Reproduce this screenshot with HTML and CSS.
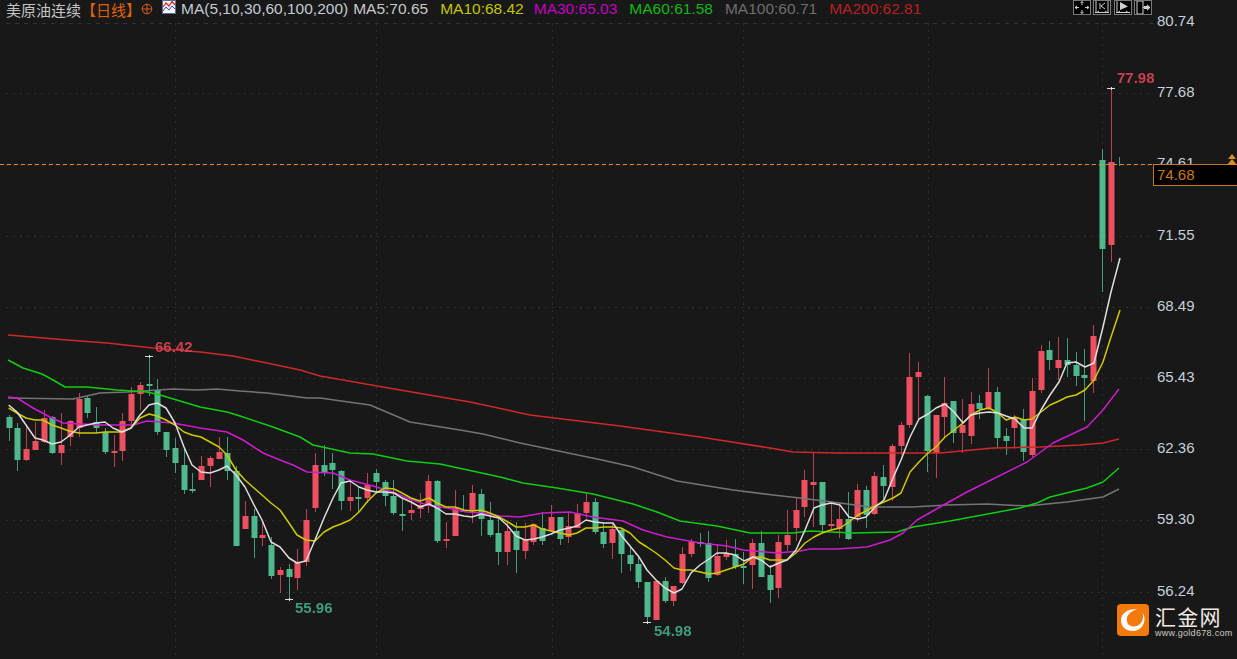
FILE: index.html
```html
<!DOCTYPE html>
<html lang="zh">
<head>
<meta charset="utf-8">
<title>美原油连续 日线</title>
<link rel="stylesheet" href="styles.css">
</head>
<body>
<div class="terminal">
  <header class="topbar">
    <div class="legend">
      <span class="symbol">美原油连续</span>
      <span class="period">【日线】</span>
      <svg class="zoom-icon" width="12" height="12" viewBox="0 0 12 12"><circle cx="6" cy="6" r="4.8"/><path d="M1 6H11M6 1V11"/></svg>
      <svg class="ma-icon" width="15" height="14" viewBox="0 0 15 14"><rect class="ma-frame" x="0.5" y="0.5" width="13" height="13"/><path class="ma-red" d="M1 7L4 3L7 6L10 1.5L13 5"/><path class="ma-blue" d="M1 11L4 7L7 10L10 6L13 9"/></svg>
      <span class="ma ma-title">MA(5,10,30,60,100,200)</span>
      <span class="ma ma5">MA5:70.65</span>
      <span class="ma ma10">MA10:68.42</span>
      <span class="ma ma30">MA30:65.03</span>
      <span class="ma ma60">MA60:61.58</span>
      <span class="ma ma100">MA100:60.71</span>
      <span class="ma ma200">MA200:62.81</span>
    </div>
    <div class="tools">
      <svg class="tool" width="18" height="15" viewBox="0 0 18 15"><path d="M2 7.5H6M12 7.5H16M9 1.5V5M9 10V13.5M4 6L2 7.5L4 9M14 6L16 7.5L14 9M7.5 3L9 1.5L10.5 3M7.5 12L9 13.5L10.5 12"/></svg>
      <svg class="tool" width="18" height="15" viewBox="0 0 18 15"><path d="M3 1V12M15 1V12M2 12.5H16M4 12.5L6 11M14 12.5L12 11M7 3V9M8 6L12 3M8 6L12 9"/></svg>
      <svg class="tool" width="18" height="15" viewBox="0 0 18 15"><path d="M3 1V12M2 12.5H16M4 12.5L6 11M14 12.5L12 11"/><path class="tool-fill" d="M6 2L14 6.5L6 10Z"/></svg>
      <svg class="tool" width="18" height="15" viewBox="0 0 18 15"><path d="M3 1H9V14H3ZM9 7.5H16M13 5L16 7.5L13 10"/><path class="tool-fill" d="M10 6H13V4.5L16 7.5L13 10.5V9H10Z"/></svg>
    </div>
  </header>
  <main class="workspace">
    <div class="plot">
      <svg id="chart" class="chart" width="1153" height="636" viewBox="0 23 1153 636"></svg>
    </div>
    <aside class="axis">
      <div class="tick">80.74</div>
      <div class="tick">77.68</div>
      <div class="tick">74.61</div>
      <div class="tick">71.55</div>
      <div class="tick">68.49</div>
      <div class="tick">65.43</div>
      <div class="tick">62.36</div>
      <div class="tick">59.30</div>
      <div class="tick">56.24</div>
      <div class="last-price">74.68</div>
      <svg class="chevrons" width="10" height="11" viewBox="0 0 10 11"><path d="M5 0L9 5H1Z"/><path d="M5 5L10 11H0Z"/></svg>
      <div class="brand">
        <svg class="brand-mark" width="32" height="32" viewBox="0 0 32 32">
          <rect class="brand-bg" width="32" height="32" rx="4"/>
          <path class="brand-swirl" d="M20 5.500C11 4.500 4 9.500 4 16.500C4 23.500 10.500 27.500 16.500 27C22.500 26.500 27.500 22 27.500 15C27.500 12.500 26.800 10.500 25.500 9C26 11 26.200 12.800 25.800 14.500C25 19.500 20.800 22.800 16 22.500C12.500 22.200 9.800 19.500 9.800 15.800C9.800 11 14 6.800 20 5.500Z"/>
        </svg>
        <div class="brand-text">
          <div class="brand-name">汇金网</div>
          <div class="brand-url">www.gold678.com</div>
        </div>
      </div>
    </aside>
  </main>
</div>
<script src="chart.js"></script>
</body>
</html>
```
FILE: styles.css
```css
* { box-sizing: border-box; }
html, body { margin: 0; padding: 0; }
body {
  width: 1237px;
  height: 659px;
  overflow: hidden;
  background: #181818;
  font-family: "Liberation Sans", "Noto Sans CJK SC", sans-serif;
}
.terminal {
  display: flex;
  flex-direction: column;
  width: 1237px;
  height: 659px;
  background: #181818;
}
.topbar {
  display: flex;
  justify-content: space-between;
  align-items: flex-start;
  flex: 0 0 23px;
  padding: 0 85px 0 6px;
}
.legend {
  display: flex;
  align-items: center;
  height: 18px;
  font-size: 15.5px;
  white-space: nowrap;
}
.symbol { color: #c4c4c4; font-size: 15px; font-family: "Noto Sans CJK SC", sans-serif; width: 75px; }
.period { color: #e0620a; font-size: 15px; font-family: "Noto Sans CJK SC", sans-serif; width: 60px; }
.zoom-icon { fill: none; stroke: #d8601a; stroke-width: 1; flex: none; }
.ma-icon { flex: none; margin: -4px 0 0 9px; }
.ma-frame { fill: #f4f4ff; stroke: #5a6a9a; }
.ma-red { fill: none; stroke: #e02020; stroke-width: 1.2; }
.ma-blue { fill: none; stroke: #3050d0; stroke-width: 1; }
.ma { margin-left: 12px; }
.ma-title { color: #c4cad2; margin-left: 4px; }
.ma5 { color: #c8c8c8; margin-left: 5px; }
.ma10 { color: #c4c400; }
.ma30 { color: #c400c4; margin-left: 10px; }
.ma60 { color: #10b810; }
.ma100 { color: #6e6e6e; }
.ma200 { color: #b82020; }
.tools { display: flex; gap: 2.5px; }
.tool {
  flex: none;
  background: #000;
  outline: 1px solid #7a7a7a;
  outline-offset: -1px;
  fill: none;
  stroke: #d0d0d0;
  stroke-width: 1;
}
.tool-fill { fill: #d0d0d0; stroke: none; }
.workspace {
  display: flex;
  flex: 1 1 auto;
  min-height: 0;
}
.plot { flex: 0 0 1153px; }
.chart { display: block; overflow: visible; filter: blur(0.35px); }
.axis {
  position: relative;
  flex: 0 0 84px;
  margin-top: -38px;
  padding-left: 4px;
}
.tick {
  display: flex;
  align-items: center;
  height: 71.2px;
  color: #c6d0da;
  font-size: 15px;
}
.last-price {
  position: absolute;
  left: 0;
  top: 179px;
  width: 84px;
  height: 22px;
  padding-left: 3px;
  background: #000;
  border: 1px solid #c47a1e;
  border-right: 0;
  color: #c9781c;
  font-size: 15px;
  line-height: 20px;
}
.chevrons { position: absolute; right: 0; top: 169px; fill: #e08a20; }
.brand {
  position: absolute;
  left: -36px;
  top: 619px;
  display: flex;
  gap: 6px;
}
.brand-bg { fill: #f47a0c; }
.brand-swirl { fill: #fff; }
.brand-mark { flex: none; }
.brand-text { display: flex; flex-direction: column; }
.brand-name {
  color: #f2ebe4;
  font-family: "Noto Sans CJK SC", sans-serif;
  font-size: 21px;
  line-height: 24px;
  letter-spacing: 1.2px;
  white-space: nowrap;
}
.brand-url {
  color: #cfc8c0;
  font-size: 9px;
  line-height: 10px;
  letter-spacing: 0.3px;
  white-space: nowrap;
}
.grid-h, .grid-v { stroke: #2f2f2f; stroke-width: 1; stroke-dasharray: 2 5; }
.grid-top { stroke: #333; stroke-width: 1; stroke-dasharray: 4 5; }
.price-line { stroke: #e08a20; stroke-width: 1; stroke-dasharray: 4 3; }
.body-up { fill: #ef5060; }
.body-down { fill: #4fb88c; }
.wick-up { stroke: #b84352; stroke-width: 1; }
.wick-down { stroke: #3f9c76; stroke-width: 1; }
.cap { stroke: #dcdcdc; stroke-width: 1; }
.line { fill: none; stroke-width: 1.5; stroke-linejoin: round; }
.line-ma5 { stroke: #dedede; }
.line-ma10 { stroke: #cfca00; }
.line-ma30 { stroke: #cc1ccc; }
.line-ma60 { stroke: #12cc12; }
.line-ma100 { stroke: #747474; }
.line-ma200 { stroke: #d02828; }
.note { font-family: "Liberation Sans", sans-serif; font-size: 15px; font-weight: 700; }
.note-high { fill: #c94050; }
.note-low { fill: #3f9c7c; }
```
FILE: chart.js
```js
var SVG_NS = 'http://www.w3.org/2000/svg';
var chart = document.getElementById('chart');

function add(tag, attrs) {
  var el = document.createElementNS(SVG_NS, tag);
  for (var k in attrs) el.setAttribute(k, attrs[k]);
  chart.appendChild(el);
  return el;
}

/* grid */
[23, 93.5, 165, 236, 307.5, 378.5, 449.5, 520.5, 592].forEach(function (y, i) {
  y = Math.floor(y) + 0.5;
  add('line', { x1: 6, x2: 1153, y1: y, y2: y, 'class': i === 0 ? 'grid-top' : 'grid-h' });
});
[175, 376, 552, 743, 928, 1102].forEach(function (x) {
  add('line', { x1: x + 0.5, x2: x + 0.5, y1: 23, y2: 659, 'class': 'grid-v' });
});

/* candles: direction (1 up, 0 down), body top, body bottom, wick top, wick bottom */
var candles = [
[0,417,428,415,441],[0,428,460,423,471],[1,449,460,427,461],[1,441,450,422,450],[1,418,442,410,443],
[0,417,453,416,454],[1,445,453,413,465],[1,421,437,420,446],[1,399,428,393,437],[0,398,413,396,418],
[0,422,428,407,432],[0,432,452,428,454],[1,451,452,435,467],[1,421,451,413,461],[1,394,421,387,425],
[1,385,394,382,410],[0,384,386,355,396],[0,390,432,379,435],[0,432,450,432,457],[0,448,463,438,473],
[0,465,490,447,494],[0,489,491,473,493],[1,466,480,456,480],[1,458,466,456,487],[1,452,459,437,459],
[0,453,471,437,480],[0,471,546,466,546],[1,516,529,501,529],[0,516,538,509,558],[1,535,538,522,546],
[0,545,576,537,579],[1,570,575,567,593],[0,569,577,564,599],[1,562,578,549,590],[1,520,562,509,566],
[1,465,508,453,512],[0,465,473,445,476],[0,463,470,453,489],[0,471,501,470,510],[1,497,501,482,511],
[0,497,499,486,513],[1,485,498,473,503],[0,473,482,469,492],[0,482,496,480,506],[0,496,513,480,515],
[0,514,516,498,531],[1,510,513,498,520],[1,505,509,493,518],[1,481,504,475,513],[0,481,541,480,543],
[1,539,541,522,548],[1,508,536,490,536],[0,510,511,495,512],[1,493,511,485,523],[0,494,519,489,536],
[0,520,535,502,537],[0,533,552,517,565],[1,531,552,522,565],[0,531,550,522,573],[1,540,551,523,559],
[1,524,542,523,545],[0,528,541,512,545],[1,517,531,505,532],[0,517,539,517,545],[1,526,537,512,543],
[1,513,528,504,528],[1,502,513,493,518],[0,502,532,498,534],[0,532,544,523,548],[1,529,543,523,559],
[0,530,554,528,573],[0,555,564,546,571],[0,564,582,555,588],[0,582,617,582,622],[1,581,620,581,620],
[0,581,601,577,603],[1,586,601,586,606],[1,554,583,547,584],[1,541,554,539,557],[0,542,543,533,547],
[0,543,578,531,582],[1,556,575,544,576],[1,553,557,540,560],[0,554,567,539,569],[0,566,567,552,584],
[1,543,565,539,589],[0,543,577,531,577],[0,575,590,565,603],[1,542,588,535,598],[1,535,545,510,551],
[1,510,528,497,541],[1,480,507,470,517],[1,482,485,453,527],[0,482,525,482,533],[1,524,525,503,530],
[1,519,529,503,538],[0,519,539,492,540],[1,490,517,484,522],[0,490,515,486,528],[1,476,514,472,515],
[0,477,486,465,500],[1,446,487,444,501],[1,425,446,422,455],[1,377,425,353,428],[1,372,377,362,420],
[0,396,451,395,472],[1,415,453,415,478],[1,403,417,377,438],[0,401,433,401,443],[1,425,433,399,453],
[1,404,436,392,444],[0,403,409,395,419],[1,392,408,368,410],[0,392,438,387,448],[0,436,441,428,455],
[1,418,428,415,448],[0,419,452,409,461],[1,391,455,378,457],[1,351,390,345,393],[0,350,360,341,370],
[1,360,368,337,380],[0,360,365,338,377],[0,365,376,352,386],[0,375,378,349,421],[1,336,381,325,393],
[0,160,249,149,292],[1,162,245,88,262],[0,163,163,157,166]
];

candles.forEach(function (c, i) {
  var x = Math.round(8.7 + 8.745 * i);
  var dir = c[0] ? 'up' : 'down';
  add('line', { x1: x + 0.5, x2: x + 0.5, y1: c[3], y2: c[4], 'class': 'wick-' + dir });
  if (c[2] > c[1]) {
    add('rect', { x: x - 2.5, y: c[1], width: 6, height: Math.max(c[2] - c[1], 2), 'class': 'body-' + dir });
  }
});

/* moving averages */
var lines = {
  ma200: '8,335 67,340 107,343 153,348 200,352 233,356 267,363 300,370 320,376 400,390 470,402 530,415 620,426 700,437 770,448 793,452 837,453 940,453 993,448 1040,447 1080,445 1103,443 1119,439',
  ma100: '8,398 73,399 100,393 127,392 173,389 197,390 217,389 240,391 267,393 307,398 320,398 370,405 410,422 460,430 483,434 520,443 602,460 633,467 677,481 733,490 773,495 800,498 840,503 870,507 913,507 947,505 987,504 1027,506 1067,502 1103,497 1119,489',
  ma60: '8,360 23,368 42,374 53,380 65,387 87,387 117,390 147,392 160,395 180,401 200,407 227,412 240,416 273,427 300,437 313,445 350,453 373,454 407,461 440,464 477,472 500,477 523,483 557,488 593,494 633,504 657,512 680,521 717,526 750,533 793,533 810,531 853,533 897,532 913,527 950,521 1020,508 1037,503 1050,497 1087,488 1103,482 1119,468',
  ma30: '8,397 17,398 33,408 50,417 63,423 100,425 133,425 147,421 173,423 200,428 227,432 243,440 263,453 280,460 293,465 307,472 333,473 350,480 373,486 393,492 407,498 427,505 447,508 467,512 483,513 500,516 520,517 543,513 570,512 593,517 623,521 643,530 667,537 700,543 727,546 743,550 777,553 800,551 810,549 837,549 867,547 890,540 903,533 917,520 940,507 967,492 997,477 1027,462 1053,443 1087,427 1103,410 1119,389',
  ma10: '8.7,408 17,413 26,418 35,420 43,420 52,425 61,428 69,431 79,433 87,433 96,433 105,432 113,432 122,432 131,428 140,418 149,414 157,416 166,420 175,425 184,432 192,435 201,437 210,442 219,447 227,455 236,470 245,480 254,488 262,495 271,503 280,510 289,523 297,535 306,540 315,541 324,532 333,527 341,524 350,520 359,512 367,502 376,493 385,488 394,489 402,493 411,498 420,501 429,498 437,503 446,507 455,507 464,510 472,511 481,510 490,513 499,517 508,522 516,527 525,527 534,525 542,529 551,531 560,533 569,535 577,533 586,528 595,528 604,527 613,527 621,528 630,533 639,542 647,547 656,553 665,560 674,568 682,570 691,570 700,572 709,574 717,573 726,570 735,567 744,564 753,557 761,557 770,560 779,560 787,560 796,553 805,543 814,537 822,533 831,530 840,528 849,522 858,515 866,511 875,506 884,502 893,498 901,493 910,472 919,462 928,453 936,447 945,437 954,430 963,423 971,415 980,410 989,408 998,413 1006,420 1015,417 1024,420 1032,419 1041,412 1050,405 1059,401 1067,397 1076,395 1085,390 1094,380 1103,362 1110,340 1120,310',
  ma5: '8.7,405 17,412 26,425 35,438 43,440 52,444 61,442 69,436 79,427 87,425 96,423 105,422 113,428 122,432 131,428 140,415 149,405 157,403 166,408 175,423 184,447 192,465 201,472 210,473 219,470 227,466 236,475 245,487 254,505 262,520 271,542 280,547 289,558 297,563 306,561 315,540 324,518 333,498 341,483 350,481 359,487 367,490 376,492 385,492 394,493 402,498 411,502 420,507 429,504 437,508 446,514 455,514 464,516 472,517 481,514 490,516 499,518 507,525 516,536 525,540 534,539 542,537 551,534 560,530 569,528 577,526 586,520 595,522 604,523 613,523 621,535 630,546 639,557 647,570 656,580 665,588 674,593 682,589 691,573 700,565 709,559 717,553 726,553 735,555 744,561 753,557 761,560 770,567 779,563 787,560 796,550 805,530 814,508 822,505 831,503 840,505 849,517 858,519 866,517 875,507 884,500 893,478 901,460 910,437 919,419 928,414 936,408 945,404 954,412 963,423 971,415 980,413 989,412 998,413 1006,416 1015,419 1024,428 1032,428 1041,410 1050,395 1059,382 1067,363 1076,362 1085,367 1094,363 1103,327 1111,292 1120,258'
};
Object.keys(lines).forEach(function (name) {
  add('polyline', { points: lines[name], 'class': 'line line-' + name });
});

/* current price line */
add('line', { x1: 0, x2: 1153, y1: 164.5, y2: 164.5, 'class': 'price-line' });

/* extremes */
[[149, 356], [1111, 88], [289, 599], [647, 622]].forEach(function (p) {
  add('line', { x1: p[0] - 4, x2: p[0] + 4, y1: p[1] + 0.5, y2: p[1] + 0.5, 'class': 'cap' });
  add('line', { x1: p[0] + 0.5, x2: p[0] + 0.5, y1: p[1] - 1, y2: p[1] + 2, 'class': 'cap' });
});
[[155, 352, '66.42', 'note-high'], [1117, 83, '77.98', 'note-high'], [295, 613, '55.96', 'note-low'], [654, 636, '54.98', 'note-low']].forEach(function (n) {
  var t = add('text', { x: n[0], y: n[1], 'class': 'note ' + n[3] });
  t.textContent = n[2];
});
```
